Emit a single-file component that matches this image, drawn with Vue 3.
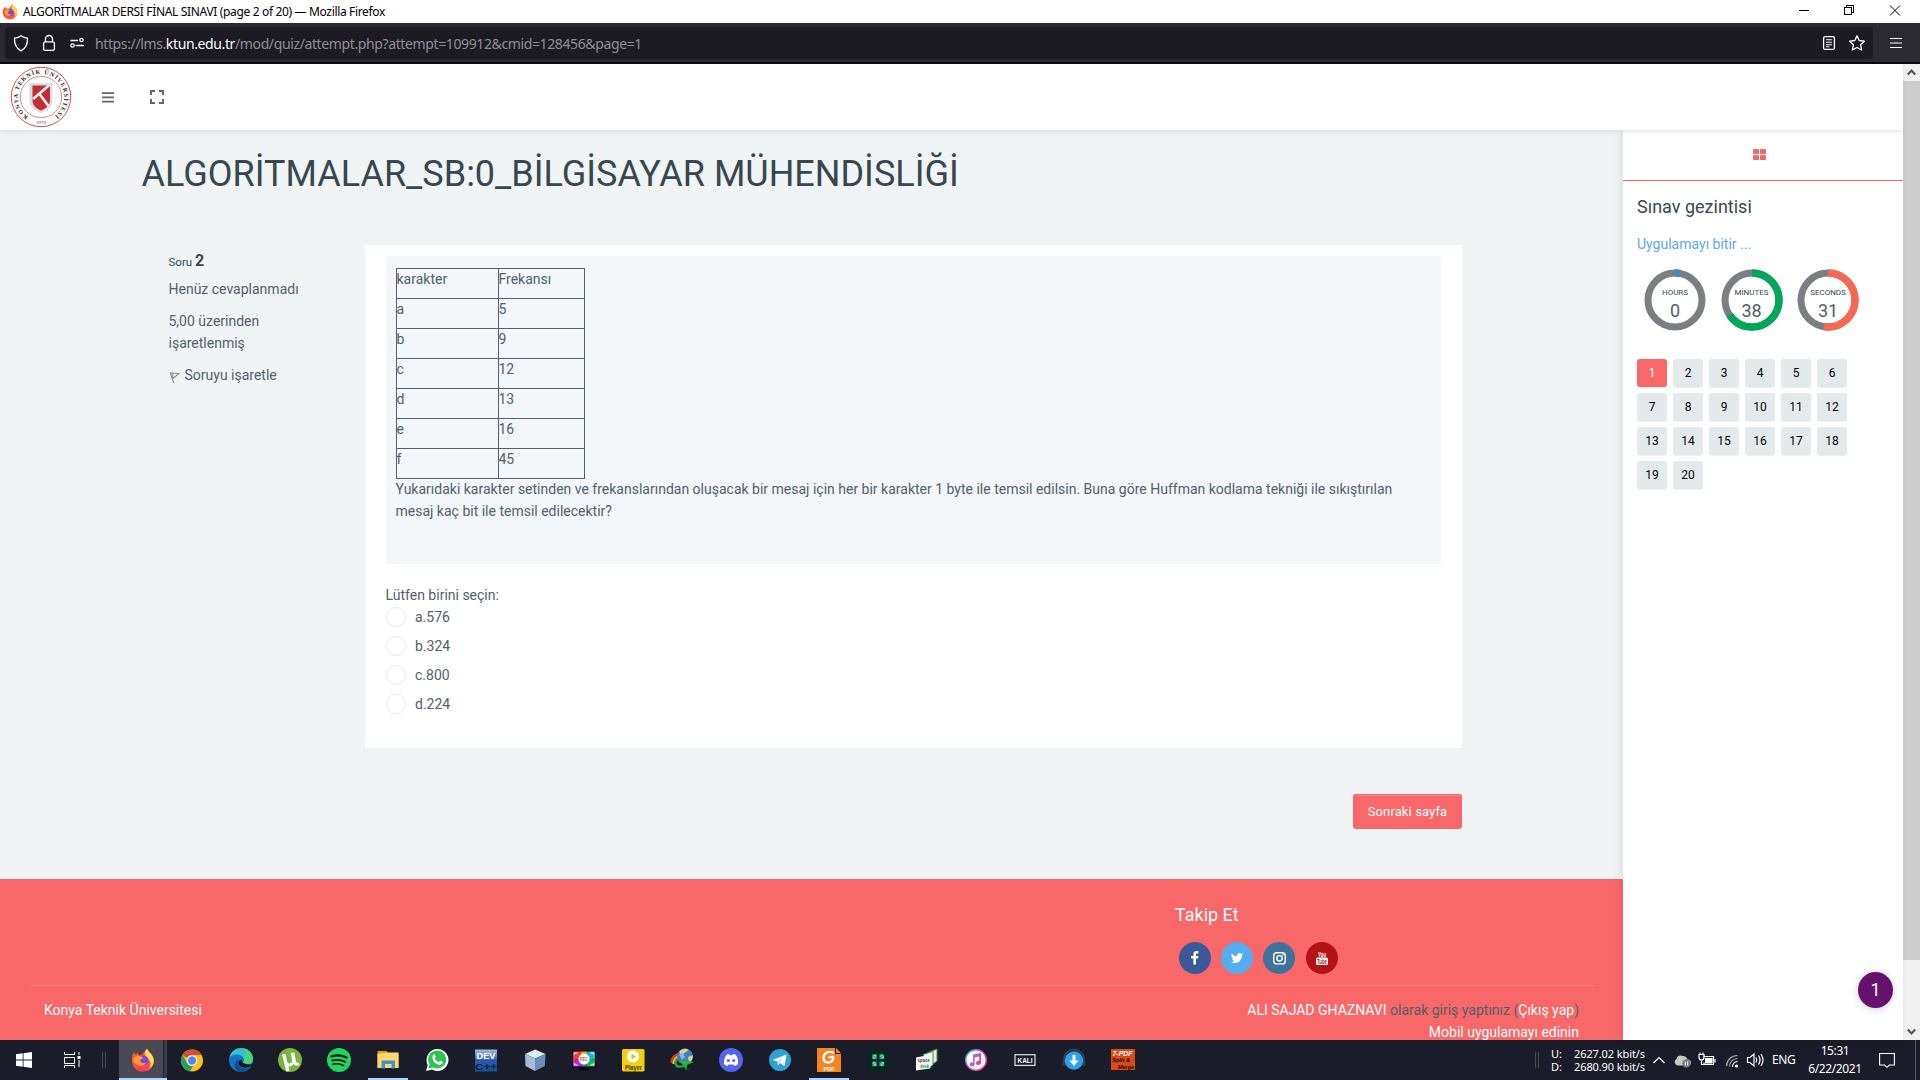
<script setup>
const rows = [
  ['karakter', 'Frekansı'],
  ['a', '5'],
  ['b', '9'],
  ['c', '12'],
  ['d', '13'],
  ['e', '16'],
  ['f', '45'],
]
const options = ['a.576', 'b.324', 'c.800', 'd.224']
const C = 2 * Math.PI * 27
const timers = [
  { label: 'HOURS', value: 0, color: '#3c8dbc', part: 0.03 },
  { label: 'MİNUTES', value: 38, color: '#00a65a', part: 38 / 60 + 0.02 },
  { label: 'SECONDS', value: 31, color: '#f56954', part: 31 / 60 + 0.006 },
]
</script>

<template>
  <div class="screen">
    <header class="titlebar">
      <svg class="fx" width="16" height="16" viewBox="0 0 24 24">
        <path d="M12 23C5.500 23 1 18 1 12C1 8.500 2.500 6 4 4l.6 2.800L6.500 5l1.800 2.600C10.500 7 12 6 12.500 4C13.500 2 15.500 1 16 0.500C16.500 3 19 4.500 20.500 6.500C22.500 9 23 11 23 13C22.500 19 18 23 12 23z" fill="#ff5a36" />
        <path d="M14.500 3C15 1.500 16 1 16 .5c.5 2.500 3 4 4.500 6C24 11 23.500 17 18.500 20.500C21 15 19 12 16 9C14 7 14 5 14.500 3z" fill="#ffd93b" />
        <circle cx="12" cy="13" r="5.200" fill="#7b3ff2" />
        <path d="M4 9c3-2 6-1 9 .5c-2 .3-3 .8-3.500 2C8 14 11 16.500 15 15c-2 4-9 4-11 0z" fill="#ff9a2e" />
      </svg>
      <span class="wtitle">ALGORİTMALAR DERSİ FİNAL SINAVI (page 2 of 20) — Mozilla Firefox</span>
      <svg class="winbtns" width="120" height="23" viewBox="0 0 120 23" fill="none" stroke="#000" shape-rendering="crispEdges">
        <path d="M4 10.500h10" />
        <path d="M49.500 7.500h7v7h-7zM51.500 7.500v-2h7v7h-2" />
        <path d="M95 5.500l10 10M105 5.500l-10 10" shape-rendering="auto" />
      </svg>
    </header>

    <nav class="navbar">
      <div class="urlbar">
        <svg class="urlicons" width="80" height="32" viewBox="0 0 80 32" fill="none" stroke="#fbfbfe" stroke-width="1.300" stroke-linejoin="round" stroke-linecap="round">
          <path d="M16 8.800c2 1.600 4.500 2.200 6.500 2.400c.2 5-1.500 10-6.500 12.600c-5-2.600-6.700-7.600-6.500-12.600c2-.2 4.500-.8 6.500-2.400z" />
          <rect x="38.600" y="14.800" width="10.800" height="8.500" rx="1.600" />
          <path d="M40.500 14.500v-2.500a3.500 3.500 0 0 1 7 0v2.500" />
          <path d="M66 13.500h6.500M71 18.500h7.500" />
          <circle cx="76.500" cy="13" r="1.700" /><circle cx="67.500" cy="18.500" r="1.700" />
        </svg>
        <span class="url">https://lms.<b>ktun.edu.tr</b>/mod/quiz/attempt.php?attempt=109912&amp;cmid=128456&amp;page=1</span>
        <svg class="urlright" width="52" height="32" viewBox="0 0 52 32" fill="none" stroke="#fbfbfe" stroke-width="1.300" stroke-linejoin="round" stroke-linecap="round">
          <rect x="2.600" y="9.600" width="10.800" height="12.800" rx="1.500" />
          <path d="M5.500 12.800h5M5.500 15.300h5M5.500 17.800h5M5.500 19.800h2.500" stroke-width="1.100" />
          <path d="M36 8.800l2.200 4.700 5.200.7-3.800 3.600 1 5.200-4.600-2.500-4.600 2.500 1-5.200-3.800-3.600 5.200-.7z" />
        </svg>
      </div>
      <svg class="burger" width="14" height="12" viewBox="0 0 14 12" stroke="#fbfbfe" stroke-width="1.200"><path d="M1 1.500h12M1 6h12M1 10.500h12" /></svg>
    </nav>

    <div class="page">
      <div class="site">
        <div class="topbar">
          <svg class="logo" width="62" height="62" viewBox="0 0 62 62">
            <circle cx="31" cy="31" r="29.700" fill="#fff" stroke="#cf4a50" stroke-width="1" />
            <circle cx="31" cy="31" r="20.700" fill="none" stroke="#d9767a" stroke-width=".9" />
            <path id="ring" d="M18.300 50.400A23.200 23.200 0 1 1 43.700 50.400" fill="none" />
            <text font-family="Liberation Serif, serif" font-size="6" font-weight="700" fill="#222"><textPath href="#ring" textLength="117">KONYA TEKNİK ÜNİVERSİTESİ</textPath></text>
            <text x="31" y="57.500" text-anchor="middle" font-family="Liberation Serif, serif" font-size="5" fill="#444">1970</text>
            <path d="M19.500 17h23v17c0 7-5 10.500-11.500 13c-6.500-2.500-11.500-6-11.500-13z" fill="#dcdde0" />
            <path d="M22.500 19.500h17.500v14.500c0 5.500-4 8.500-9 10.500c-5-2-8.500-5-8.500-10.500z" fill="#c22c33" />
            <path d="M40 18.500L23 33M29.500 28l9 12" stroke="#ebecee" stroke-width="2.600" />
          </svg>
          <svg class="menu" width="12" height="11" viewBox="0 0 12 11" fill="#666"><path d="M0 .3h12v1.700H0zM0 4.600h12v1.700H0zM0 8.800h12v1.700H0z" /></svg>
          <svg class="full" width="14" height="14" viewBox="0 0 14 14" fill="none" stroke="#666" stroke-width="2"><path d="M1 5V1h4M9 1h4v4M13 9v4H9M5 13H1V9" /></svg>
        </div>

        <div class="body">
          <main class="main">
            <h1>ALGORİTMALAR_SB:0_BİLGİSAYAR MÜHENDİSLİĞİ</h1>
            <div class="question">
              <aside class="info">
                <p class="no">Soru <b>2</b></p>
                <p>Henüz cevaplanmadı</p>
                <p>5,00 üzerinden işaretlenmiş</p>
                <p class="flag">
                  <svg width="11" height="13" viewBox="0 0 11 13" fill="none" stroke="#8a8f92" stroke-width="1.100"><path d="M1.200 1.500L4.800 12M1.500 1.800L10 2.600L3.800 7.500M3.800 1.800v5.500" /></svg>
                  <span>Soruyu işaretle</span>
                </p>
              </aside>
              <section class="card">
                <div class="formulation">
                  <table>
                    <tbody>
                      <tr v-for="r in rows" :key="r[0]"><td>{{ r[0] }}</td><td>{{ r[1] }}</td></tr>
                    </tbody>
                  </table>
                  <p class="qtext"><span class="l1">Yukarıdaki karakter setinden ve frekanslarından oluşacak bir mesaj için her bir karakter 1 byte ile temsil edilsin. Buna göre Huffman kodlama tekniği ile sıkıştırılan</span><br>mesaj kaç bit ile temsil edilecektir?</p>
                </div>
                <div class="prompt">Lütfen birini seçin:</div>
                <label v-for="o in options" :key="o" class="option"><i></i><span>{{ o }}</span></label>
              </section>
            </div>
            <div class="actions"><button class="next">Sonraki sayfa</button></div>

            <footer class="footer">
              <div class="social">
                <h4>Takip Et</h4>
                <div class="icons">
                  <span style="background: #3b5998"><svg viewBox="0 0 32 32"><path d="M17 22.500v-6h2l.4-2.500h-2.400v-1.400c0-.8.3-1.200 1.200-1.200h1.200V9.200c-.4-.1-1-.2-1.800-.2c-2 0-3.200 1.200-3.200 3.200V14h-2.300v2.500h2.300v6z" fill="#fff" /></svg></span>
                  <span style="background: #55acee"><svg viewBox="0 0 32 32"><path d="M22.300 12.200c-.4.200-.9.300-1.400.4c.5-.3.900-.8 1.100-1.400c-.5.300-1 .5-1.600.6a2.600 2.600 0 0 0-4.400 2.300c-2.100-.1-4-1.100-5.200-2.700c-.7 1.200-.3 2.700.8 3.400c-.4 0-.8-.1-1.200-.3c0 1.200.9 2.300 2.100 2.500c-.4.100-.8.100-1.200 0c.3 1 1.300 1.800 2.400 1.800c-1.100.9-2.400 1.200-3.800 1.100c4.900 3 11-.1 11-6.300c.6-.4 1-.9 1.400-1.400z" fill="#fff" /></svg></span>
                  <span style="background: #3f729b"><svg viewBox="0 0 32 32" fill="none" stroke="#fff" stroke-width="1.400"><rect x="10.700" y="10.700" width="11.600" height="11.200" rx="3" /><circle cx="16.500" cy="16.300" r="2.700" /><circle cx="19.900" cy="13" r=".4" stroke-width="1" /></svg></span>
                  <span class="yt" style="background: #b31217"><svg viewBox="0 0 32 32"><rect x="10" y="15.500" width="12" height="7.500" rx="1.500" fill="#fff" /><g font-family="Liberation Sans Narrow, Liberation Sans, sans-serif" font-weight="700"><text x="12" y="14.500" font-size="6.500" textLength="8" lengthAdjust="spacingAndGlyphs" fill="#fff">You</text><text x="11" y="21.800" font-size="6.300" textLength="10" lengthAdjust="spacingAndGlyphs" fill="#b31217">Tube</text></g></svg></span>
                </div>
              </div>
              <div class="credits">
                <div>Konya Teknik Üniversitesi</div>
                <div class="login"><span>ALI SAJAD GHAZNAVI</span> <em>olarak giriş yaptınız (</em><span>Çıkış yap</span><em>)</em><br><span>Mobil uygulamayı edinin</span></div>
              </div>
            </footer>
          </main>

          <aside class="sidebar">
            <div class="tab"><svg width="13" height="11" viewBox="0 0 13 11" fill="#f96868"><rect width="6" height="5" rx=".8" /><rect x="7" width="6" height="5" rx=".8" /><rect y="6" width="6" height="5" rx=".8" /><rect x="7" y="6" width="6" height="5" rx=".8" /></svg></div>
            <h3>Sınav gezintisi</h3>
            <a class="finish">Uygulamayı bitir ...</a>
            <div class="timers">
              <div v-for="t in timers" :key="t.label" class="timer">
                <svg width="62" height="62" viewBox="0 0 62 62" fill="none">
                  <circle cx="31" cy="31" r="27" stroke="#7b7e82" stroke-width="7" />
                  <circle cx="31" cy="31" r="27" :stroke="t.color" stroke-width="7.500" :stroke-dasharray="`${C * t.part} ${C}`" transform="rotate(-90 31 31)" />
                </svg>
                <div class="face"><small>{{ t.label }}</small><span>{{ t.value }}</span></div>
              </div>
            </div>
            <div class="grid"><span v-for="n in 20" :key="n" :class="{ current: n === 1 }">{{ n }}</span></div>
            <div class="bubble">1</div>
          </aside>
        </div>
      </div>

      <div class="scrollbar">
        <svg width="17" height="17" viewBox="0 0 17 17" fill="none" stroke="#555" stroke-width="2.200"><path d="M4.800 10.500L8.500 6.500l3.700 4" /></svg>
        <div class="thumb"></div>
        <svg width="17" height="17" viewBox="0 0 17 17" fill="none" stroke="#555" stroke-width="2.200"><path d="M4.800 6.500L8.500 10.500l3.700-4" /></svg>
      </div>
    </div>

    <div class="taskbar">
      <div class="start"><svg width="16" height="16" viewBox="0 0 16 16" fill="#fff"><path d="M0 2.200l6.700-.9v6.200H0zM7.500 1.200L16 0v7.500H7.500zM0 8.400h6.700v6.300L0 13.800zM7.500 8.400H16V16l-8.500-1.200z" /></svg></div>
      <div class="taskview"><svg width="17" height="16" viewBox="0 0 17 16" fill="none" stroke="#fff"><path d="M.5 0v2.500h10V0M.5 16v-2.500h10V16M.5 5.500h10v6H.5zM15 0v3M15 8v7" /><rect x="13.500" y="4" width="3" height="3" fill="#fff" stroke="none" /></svg></div>
      <div class="grip"></div>
      <div class="apps">
        <div class="active">
          <svg viewBox="0 0 24 24">
            <path d="M12 23.500C5.500 23.500 1 18.500 1 12.500C1 9 1.500 6 3 4l1.500 2.800L6.500 4.500l1.800 3C10.500 7 12 6 12.500 4.500C13.500 2.500 15.500 1.500 16 .5C17 3 19 4.500 20.500 6.500C22.500 9 23 11 23 13.500C22.500 19.500 18 23.500 12 23.500z" fill="#ff5135" />
            <path d="M14 4.500C14.500 2 15.500 1.500 16 .5c1 2.500 3 4 4.500 6C24 11 23.500 17 18.500 20.500C21 15 19 12 16 9.500C14 7.500 13.500 6.500 14 4.500z" fill="#ffe14d" />
            <path d="M5 17c2 3.500 10 5 14 0c-2 6-8 6.500-11.500 4.500z" fill="#ff3277" />
            <circle cx="12.500" cy="12.500" r="5" fill="#7c42e8" />
            <path d="M2 10c3-3 7-3 11 .2c-2 .1-3 .5-3.500 1.600C8.500 14 11.500 16 15 14.500c-2 4.500-9 4-12 0z" fill="#ff9a2e" />
          </svg>
        </div>
        <div><svg viewBox="0 0 24 24"><circle cx="12" cy="12.500" r="11" fill="#fbc116" /><path d="M2.500 7A11 11 0 0 1 21.600 7H12a5.500 5.500 0 0 0-5 3.200z" fill="#db4a3f" /><path d="M2.500 7l4.900 8.500A5.500 5.500 0 0 0 13 18l-3 5.300A11 11 0 0 1 2.500 7z" fill="#1fa15d" /><circle cx="12" cy="12.500" r="5.200" fill="#fff" /><circle cx="12" cy="12.500" r="4.200" fill="#4a8af4" /></svg></div>
        <div><svg viewBox="0 0 24 24"><circle cx="12" cy="12" r="12" fill="#1574c4" /><path d="M.3 10C2 3 7 0 12 0c7 0 12 5 12 10.500c0 4-3 6-6 6c-2.500 0-4-.8-4-1.700c0-.6 1-1 1-2.800C15 9 12 6.500 8 6.500C4.500 6.500 1.500 8 .3 10z" fill="#35c1d0" /><path d="M14 .2C20 1 24 6 24 10.500c0 4-3 6-6 6c-2 0-4-1-4-1.700c0-.6 1-1 1-2.800C17 8 18 4 14 .2z" fill="#56d760" opacity=".75" /><path d="M9.500 11C7 16 11 21 17 20.500c3-.4 4.500-1.500 5.500-2.700C20 22 16 24 12 24c-6 0-9-8-2.500-13z" fill="#0f4c91" /><path d="M14 14.800c-1.500-.5-1.500-2-.5-3c-3-.8-4.500 1.700-4 4c1 3.500 6.500 5.500 12.500 2.200l3 2v-4.500c-3 1.500-8 1-11-.7z" fill="#171927" /></svg></div>
        <div><svg viewBox="0 0 24 24"><circle cx="12" cy="12" r="12" fill="#79b340" /><path d="M4 6.500l3.500-.5 1.500 7q.6 3 3 2.500q2.500-.5 2-3.500l-1.200-7 3.500-.6 1.700 9q.4 1.800 2.500 1.300l1 2.300q-4.500 1.700-5.800-1q-2 3-5.200 2.300l.8 4.800-3 .4z" fill="#fff" /></svg></div>
        <div><svg viewBox="0 0 24 24"><circle cx="12" cy="12" r="12" fill="#1ed760" /><g fill="none" stroke="#141a17" stroke-linecap="round"><path d="M4.500 8.300c5-1.500 10.500-1 15 1.300" stroke-width="2.300" /><path d="M5.200 12.500c4.500-1.200 9-.7 13 1.300" stroke-width="1.900" /><path d="M5.800 16.300c4-1 7.500-.5 10.800 1.200" stroke-width="1.600" /></g></svg></div>
        <div class="open"><svg viewBox="0 0 24 24"><path d="M1.500 3h9l2 2.500h10V20h-21z" fill="#e3a218" /><path d="M1.500 6L11 4.500h11.500V20h-21z" fill="#ffd867" /><path d="M5.500 12.500h13.500v8h-3.500V16h-6.500v4.500H5.500z" fill="#3f91d9" /></svg></div>
        <div><svg viewBox="0 0 24 24"><path d="M1 23l1.700-6A11 11 0 1 1 7 21.500z" fill="#fff" /><path d="M3.500 20.500l1-4.200A9 9 0 1 1 8 19.500z" fill="#2cc64f" /><path d="M8.500 6.500c1-.7 1.500 0 2.200 2c.2.700-.5 1-1 1.700c1 2 2 3 4 3.800c.8-.5 1-1.500 1.700-1.200c2 .9 2.700 1.300 2 2.500c-2 3-6 1-8-1C7.500 12 6.500 8.500 8.500 6.500z" fill="#fff" /></svg></div>
        <div><svg viewBox="0 0 24 24"><defs><linearGradient id="dv" x2="0" y2="1"><stop stop-color="#a8bcd9" /><stop offset=".5" stop-color="#2c5aa8" /><stop offset="1" stop-color="#174f98" /></linearGradient></defs><rect x="1" y="1.500" width="22" height="22" fill="url(#dv)" /><g font-family="Liberation Sans, sans-serif" font-weight="700"><text x="2.500" y="10.800" font-size="9" textLength="19" lengthAdjust="spacingAndGlyphs" fill="#fff">DEV</text><text x="1" y="21.800" font-size="9" textLength="22" lengthAdjust="spacingAndGlyphs" fill="#08203f">C++</text></g></svg></div>
        <div><svg viewBox="0 0 24 24"><path d="M2 6l10-4.500L22.500 6 12 10.500z" fill="#dcebea" /><path d="M2 6l10 4.500V23L2.500 18z" fill="#a6bdd6" /><path d="M22.500 6L12 10.500V23l9.800-5z" fill="#6b8fb8" /></svg></div>
        <div><svg viewBox="0 0 24 24"><rect y="2.500" width="24" height="17.500" fill="#08080c" /><path d="M1 3.500h7L12 11 1 12z" fill="#fb3a3a" /><path d="M8 3.500h8L12 11z" fill="#ff9d1c" /><path d="M16 3.500h7v8H12z" fill="#17b8dd" /><path d="M23 11.500V18.500h-8L12 11z" fill="#20b455" /><path d="M1 12l11-1-4 7.500H1z" fill="#b52bd6" /><path d="M8 18.500l4-7.500 3 7.500z" fill="#3b66e0" /><path d="M2.500 7V5h3M18.500 5h3v2M21.500 15v2h-3M5.500 17h-3v-2" fill="none" stroke="#fff" /><circle cx="12" cy="11" r="5.500" fill="#fff" /><text x="8" y="13" font-family="Liberation Sans, sans-serif" font-size="5" font-weight="700" textLength="8" lengthAdjust="spacingAndGlyphs" fill="#ef4b32">REC</text><path d="M7 21.500h10M12 19v3" stroke="#050508" stroke-width="1.500" /></svg></div>
        <div><svg viewBox="0 0 24 24"><rect x="1" y="1" width="22.500" height="22.500" rx="1.500" fill="#f0cf14" /><circle cx="12" cy="8.500" r="6" fill="#fff" /><path d="M10.500 5.500l4.500 3-4.500 3z" fill="#e3bd10" /><text x="4" y="21.500" font-family="Liberation Sans, sans-serif" font-size="6.500" font-weight="700" textLength="17" lengthAdjust="spacingAndGlyphs" fill="#41390a">Player</text></svg></div>
        <div><svg viewBox="0 0 24 24"><path d="M13 6C6 5 1 9 1.500 15" fill="none" stroke="#e33426" stroke-width="2" /><path d="M13 8C7 7 3 11 3.500 16" fill="none" stroke="#f4cf26" stroke-width="2" /><path d="M12 9.500c-4 0-7 3-6.500 6.500c1 3 5 4 9 1" fill="none" stroke="#21a737" stroke-width="2.500" /><circle cx="15" cy="8.500" r="8" fill="#477bbd" /><path d="M9.500 3.500c2-3 7-3.500 9-1.500l-4 3-4 3zM18 9l5-2c0 4-2 7-4 7z" fill="#dbd385" /><path d="M9 6l4-1 2 4-3 3z" fill="#8fb6e0" /><path d="M10 12l14 2-7 3-.5 5.500z" fill="#24b92e" /></svg></div>
        <div><svg viewBox="0 0 24 24"><circle cx="12" cy="12" r="12" fill="#5563ee" /><path d="M8 6.500L10 6l.7 1.300h2.600L14 6l2.500.6c2 2.500 3 6 2.500 9.400c-1 1-2 1.500-3.500 2l-1-1.600h-5L8.500 18C7 17.500 6 17 5 16c-.5-3.500.7-7 3-9.500z" fill="#fff" /><circle cx="9.300" cy="12.500" r="1.600" fill="#5563ee" /><circle cx="14.700" cy="12.500" r="1.600" fill="#5563ee" /></svg></div>
        <div><svg viewBox="0 0 24 24"><circle cx="12" cy="12" r="11" fill="#2ea1d9" /><path d="M4.500 12L18.500 6.500 16.500 18l-4.500-3-2 2.300-.8-4z" fill="#fff" /><path d="M9.500 13.500L16 8.500 11.300 14.500 10 17z" fill="#b6d4e6" /></svg></div>
        <div class="open"><svg viewBox="0 0 24 24"><path d="M0 0h18v6h6v18H0z" fill="#f5831f" /><path d="M19 0l5 5h-5z" fill="#f5831f" /><path d="M17 5C11 2 6.500 5.500 6.500 10c0 3.500 3 5 6 4.300c2.800-.7 4-3 3.500-5.300c-1.500-.3-3.500 0-4.500 1" fill="none" stroke="#fff" stroke-width="2.400" /><text x="6.500" y="22.500" font-family="Liberation Sans, sans-serif" font-size="5.500" font-weight="700" textLength="11" fill="#fff">PDF</text></svg></div>
        <div><svg viewBox="0 0 24 24"><rect x="1.500" y="1.500" width="21.500" height="21.500" rx="3" fill="#042720" /><path d="M6.500 6.500h4.300v4.300H6.500zM13.700 13.700h4.300v4.300h-4.300zM6.500 13.700h4.300v4.300H6.500zM13.700 6.500h4.300v4.300h-4.300z" fill="#6fe3bd" /><path d="M10.500 6.500v4L6.500 7M14 6.500v4l4-3.500M10.500 18v-4l-4 3.500M14 18v-4l4 3.500" fill="none" stroke="#1d8467" stroke-width="1" /></svg></div>
        <div><svg viewBox="0 0 24 24"><path d="M12 5l10-4v12l-4 3z" fill="#e6f1e4" stroke="#468d4f" /><path d="M8 6.500l10-3v13l-4 4z" fill="#f4f7f2" stroke="#468d4f" /><path d="M1 9.500l15-3-1 14L1 22.500z" fill="#f4f4ef" /><g font-family="Liberation Sans, sans-serif" font-weight="700"><text x="2.500" y="14" font-size="5" textLength="12" lengthAdjust="spacingAndGlyphs" fill="#444">space</text><text x="5" y="19.500" font-size="5" textLength="9" lengthAdjust="spacingAndGlyphs" fill="#36964a">desk</text></g></svg></div>
        <div><svg viewBox="0 0 24 24"><defs><linearGradient id="it" x2="1" y2=".6"><stop stop-color="#3fb9f0" /><stop offset=".5" stop-color="#b35be0" /><stop offset="1" stop-color="#fa3f77" /></linearGradient></defs><circle cx="12" cy="12" r="10.300" fill="#fff" stroke="url(#it)" stroke-width="1.500" /><path d="M9 6.500L17 5v10a2.500 2 0 1 1-1.800-2V8.500l-4.600 1v7a2.500 2 0 1 1-1.600-2z" fill="url(#it)" /></svg></div>
        <div><svg viewBox="0 0 24 24"><rect x="2" y="6.700" width="20" height="10.700" fill="#1b1c29" stroke="#e1e2e6" stroke-width="1.200" /><text x="4.500" y="14.700" font-family="Liberation Sans, sans-serif" font-size="7" font-weight="700" textLength="15" lengthAdjust="spacingAndGlyphs" fill="#fff">KALI</text></svg></div>
        <div><svg viewBox="0 0 24 24"><path d="M2 15V11a10 9.500 0 0 1 20 0v4" fill="none" stroke="#3d4557" stroke-width="1.500" /><rect x=".5" y="12" width="4" height="6" rx="1.500" fill="#343c4d" /><rect x="19.500" y="12" width="4" height="6" rx="1.500" fill="#343c4d" /><circle cx="12" cy="12.500" r="9.200" fill="#2ba3ea" /><path d="M10.500 7h3v5.500h3.200L12 18l-4.700-5.500h3.200z" fill="#fff" /></svg></div>
        <div><svg viewBox="0 0 24 24"><rect y="1" width="24" height="21" fill="#d94a16" /><g font-family="Liberation Sans, sans-serif" font-weight="700" font-style="italic"><text x="1.500" y="7.500" font-size="6.500" textLength="20" lengthAdjust="spacingAndGlyphs" fill="#fff">7-PDF</text><text x="1" y="14.300" font-size="5.500" textLength="18" lengthAdjust="spacingAndGlyphs" fill="#1b0d07">Split &amp;</text><text x="7" y="20.500" font-size="5.500" textLength="16" lengthAdjust="spacingAndGlyphs" fill="#1b0d07">Merge</text></g></svg></div>
      </div>
      <div class="tray">
        <div class="grip"></div>
        <div class="net"><span>U:</span><span>2627.02 kbit/s</span><span>D:</span><span>2680.90 kbit/s</span></div>
        <svg class="trayicons" width="115" height="40" viewBox="0 0 115 40" fill="none" stroke="#fff" stroke-width="1.200">
          <path d="M.5 23L6 17.500 11.500 23" />
          <path d="M24.500 25.500a3.500 3.500 0 0 1-1-6.500a4 4 0 0 1 6-3a5 5 0 0 1 5 3.500a3 3 0 0 1 1 6z" fill="#c8c8ca" stroke="none" />
          <circle cx="33.500" cy="23.500" r="4.200" fill="#77777b" stroke="none" /><path d="M32.300 21.500v4M34.700 21.500v4" stroke-width="1" />
          <path d="M50.500 16.500h10v8h-10M51 24.500v-2" /><rect x="52" y="18" width="7.500" height="5.500" fill="#fff" stroke="none" /><path d="M62 19v3.500" /><path d="M46 14.500h5v3a2.500 2.500 0 0 1-5 0zM47 12.500v2M50 12.500v2M48.500 20v4.500h2.500" />
          <g stroke="#aaaab0"><path d="M73.500 26A11 11 0 0 1 84.500 15.500" /><path d="M76.500 26.500A8 8 0 0 1 84.500 18.500" /><path d="M79.500 27A5.500 5.500 0 0 1 84.500 21.500" stroke="#fff" /></g><circle cx="83.500" cy="26" r="1.600" fill="#fff" stroke="none" />
          <path d="M94.500 17.500h2.500l4-3.500v12l-4-3.500h-2.500zM103 17.500q1.500 2.500 0 5M105.500 15.500q3 4.500 0 9M108 14q4 6 0 12" />
        </svg>
        <span class="lang">ENG</span>
        <div class="clock"><span>15:31</span><span>6/22/2021</span></div>
        <svg class="notify" width="16" height="16" viewBox="0 0 16 16" fill="none" stroke="#fff" stroke-width="1.100"><path d="M.6 1.500h14.800v11.500H10.500L8 15.300 5.500 13H.6z" /></svg>
        <div class="peek"></div>
      </div>
    </div>
  </div>
</template>

<style>
body { margin: 0; overflow: hidden; }
</style>

<style scoped>
* { box-sizing: border-box; }
svg { display: block; flex: none; }
.screen { width: 1920px; height: 1080px; display: flex; flex-direction: column; overflow: hidden; font-family: Roboto, sans-serif; color: #526069; background: #fff; }
h1, h3, h4, p { margin: 0; font-weight: 400; }

.titlebar { height: 23px; display: flex; align-items: center; padding-left: 2px; font-family: "Noto Sans", sans-serif; }
.wtitle { margin-left: 5px; font-size: 12px; line-height: 23px; color: #000; letter-spacing: -0.34px; white-space: nowrap; }
.winbtns { margin-left: auto; margin-right: 5px; }

.navbar { height: 41px; background: #2b2a33; border-bottom: 2px solid #0c0c10; display: flex; align-items: flex-start; padding: 4px 0 0 5px; }
.urlbar { width: 1868px; height: 32px; border-radius: 4px; background: #1c1b22; display: flex; align-items: center; }
.url { margin: 1px 0 0 10px; font-family: "Noto Sans", sans-serif; font-size: 14px; color: #8f8f96; white-space: nowrap; letter-spacing: -0.38px; }
.url b { font-weight: 400; color: #fbfbfe; }
.urlright { margin-left: auto; }
.burger { margin: 10px 0 0 16px; }

.page { height: 976px; display: flex; }
.site { width: 1903px; display: flex; flex-direction: column; }
.topbar { height: 66px; flex: none; display: flex; align-items: center; padding-left: 10px; background: #fff; box-shadow: 0 2px 5px rgba(0, 0, 0, .09); position: relative; z-index: 2; }
.menu { margin-left: 30px; }
.full { margin-left: 36px; }
.body { display: flex; height: 910px; }
.main { width: 1623px; background: #f0f4f5; display: flex; flex-direction: column; }
h1 { height: 115px; padding: 18px 0 0 141.500px; font-size: 36px; line-height: 52px; color: #37474f; white-space: nowrap; }
.question { display: flex; height: 503px; padding-left: 168px; }
.info { width: 197px; padding-top: 5px; font-size: 14px; line-height: 22px; }
.info p { width: 150px; margin-bottom: 10px; padding-left: 0.5px; }
.info .no { font-size: 11.500px; margin-bottom: 5px; color: #37474f; }
.no b { font-size: 16px; font-weight: 700; }
.flag { display: flex; align-items: center; gap: 5px; white-space: nowrap; }
.flag svg { margin-top: 5px; }
.card { width: 1097px; background: #fff; padding: 11px 21px 0 20.500px; font-size: 14px; line-height: 22px; }
.formulation { height: 308px; padding: 12px 10px 0; background: #f3f7fa; border-radius: 3px; }
table { border-collapse: collapse; width: 189px; table-layout: fixed; }
td { height: 30px; padding: 0; border: 1px solid #526069; vertical-align: top; line-height: 20px; }
td:first-child { width: 102px; }
.qtext { margin-top: -1px; }
.l1 { white-space: nowrap; }
.prompt { margin-top: 20px; }
.option { display: flex; align-items: center; height: 22px; margin-bottom: 7px; }
.option i { width: 20px; height: 20px; border: 1px solid #e4eaec; border-radius: 50%; margin-right: 9.500px; }
.actions { display: flex; justify-content: flex-end; padding: 46px 161px 50px 0; }
.next { width: 109px; height: 35px; padding: 0; border: 0; border-radius: 3px; background: #f96868; color: #fff; font: 400 13px Roboto, sans-serif; box-shadow: inset 0 1px #f96868, inset 0 2px #fb8585; letter-spacing: 0.12px; }
.footer { flex: 1; background: #f96868; color: #fff; padding: 23px 29px 0; overflow: hidden; }
.social { height: 83px; padding-left: 1146px; }
h4 { font-size: 18px; line-height: 26px; }
.icons { display: flex; gap: 10px; padding: 14px 0 0 4px; }
.icons span { width: 32px; height: 32px; border-radius: 50%; }
.icons .yt { margin-left: 1px; }
.credits { border-top: 1px solid #fb8080; display: flex; justify-content: space-between; width: 1565px; padding: 13px 15px 0; font-size: 14px; line-height: 22px; }
.login { text-align: right; }
.login em { font-style: normal; color: #526069; }

.sidebar { width: 280px; background: #fff; position: relative; box-shadow: -2px 0 8px rgba(0, 0, 0, .09); }
.tab { height: 51px; border-bottom: 1px solid #f96868; display: flex; align-items: center; justify-content: center; padding: 0 7px 2px 0; }
h3 { padding: 13px 0 0 14px; font-size: 18px; line-height: 26px; color: #37474f; }
.finish { display: block; padding: 13px 0 0 14px; font-size: 14px; line-height: 22px; color: #62a8ea; }
.timers { display: flex; gap: 15px; padding: 14px 0 0 21px; }
.timer { position: relative; width: 61.500px; height: 62px; }
.face { position: absolute; inset: 0; width: 62px; display: flex; flex-direction: column; align-items: center; padding-top: 18px; }
.face small { font-size: 8px; line-height: 12px; color: #37474f; }
.face span { font-size: 18px; line-height: 20px; margin-top: 2px; }
.grid { display: flex; flex-wrap: wrap; gap: 6px; width: 214px; margin: 28px 0 0 14px; }
.grid span { width: 30px; height: 28px; border-radius: 3px; background: #e4eaec; box-shadow: 0 1px 1px rgba(0, 0, 0, .07); color: #000; font-size: 12px; line-height: 28px; text-align: center; }
.grid .current { background: #f96868; color: #fff; }
.bubble { position: absolute; right: 10px; bottom: 32px; width: 35px; height: 36px; border-radius: 50%; background: #66116b; color: #fff; font-size: 18px; line-height: 36px; text-align: center; box-shadow: 0 1px 8px rgba(0, 0, 0, .2); }

.scrollbar { width: 17px; background: #f0f0f0; display: flex; flex-direction: column; }
.thumb { height: 879px; background: #cdcdcd; margin-bottom: 63px; }

.taskbar { height: 40px; background: #1b1c29; display: flex; color: #fff; }
.start, .taskview { display: flex; align-items: center; justify-content: center; width: 48px; }
.grip { width: 4px; height: 16px; margin: 12px 0 0 6px; border-left: 1px solid #484955; border-right: 1px solid #484955; }
.apps { display: flex; margin-left: 12px; }
.apps > div { width: 49px; height: 40px; padding: 8px 12px 0 13px; }
.apps svg { width: 24px; height: 24px; }
.apps .active { background: linear-gradient(#484955, #484955) 1px 0 / 44px 38px no-repeat, linear-gradient(#3a3b42, #3a3b42) 46px 0 / 3px 38px no-repeat, linear-gradient(#a5d8ff, #a5d8ff) 1px 38px / 48px 2px no-repeat; }
.apps .open { background: linear-gradient(#a5d8ff, #a5d8ff) 5px 38px / 40px 2px no-repeat; }
.tray { margin-left: auto; display: flex; width: 385px; font-family: "Noto Sans", sans-serif; }
.tray .grip { margin-left: 0; }
.net { display: grid; grid-template: 13px 13px / 23px 75px; font-size: 11px; line-height: 13px; margin: 7px 0 0 12px; white-space: nowrap; letter-spacing: -0.1px; }
.trayicons { margin-left: 4px; }
.lang { margin-left: 4px; font-size: 12px; line-height: 40px; width: 25px; letter-spacing: -0.4px; }
.clock { width: 62px; margin-left: 7px; display: flex; flex-direction: column; align-items: center; font-size: 12px; line-height: 18px; padding-top: 2px; letter-spacing: -0.4px; }
.notify { margin: 12px 0 0 13px; }
.peek { margin-left: auto; border-left: 1px solid #5a5b66; width: 5px; }
</style>
